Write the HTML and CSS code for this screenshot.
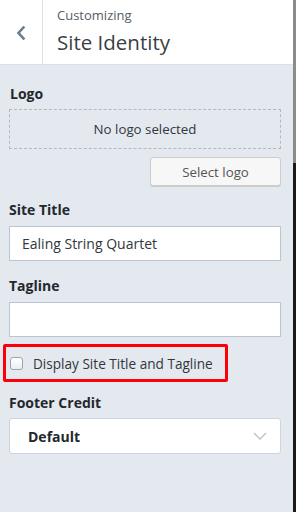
FILE: index.html
```html
<!DOCTYPE html>
<html>
<head>
<meta charset="utf-8">
<link rel="stylesheet" href="styles.css">
</head>
<body>
<div class="page">
  <div class="panel">
    <div class="header">
      <div class="back">
        <svg width="10" height="14" viewBox="0 0 10 14"><path d="M7.5 1.5 L2.5 7 L7.5 12.5" fill="none" stroke="#6b7f90" stroke-width="2.6" stroke-linecap="square"/></svg>
      </div>
      <div class="titles">
        <div class="sub">Customizing</div>
        <div class="title">Site Identity</div>
      </div>
    </div>
    <div class="content">
      <div class="label label-logo">Logo</div>
      <div class="dropzone">No logo selected</div>
      <div class="btn-row"><div class="btn">Select logo</div></div>
      <div class="label label-title">Site Title</div>
      <div class="input">Ealing String Quartet</div>
      <div class="label label-tag">Tagline</div>
      <div class="input"></div>
      <div class="highlight">
        <span class="checkbox"></span>
        <span class="check-text">Display Site Title and Tagline</span>
      </div>
      <div class="label label-footer">Footer Credit</div>
      <div class="select">
        <span class="select-text">Default</span>
        <svg width="14" height="8" viewBox="0 0 14 8"><path d="M1 1 L7 7 L13 1" fill="none" stroke="#b9c2cc" stroke-width="1.3"/></svg>
      </div>
    </div>
  </div>
  <div class="edge"></div>
</div>
</body>
</html>
```
FILE: styles.css
```css
html, body {
  margin: 0;
  padding: 0;
}
body {
  width: 296px;
  height: 512px;
  overflow: hidden;
  font-family: "Open Sans", "Liberation Sans", sans-serif;
  color: #32373c;
}
.page {
  display: flex;
  height: 512px;
}
.panel {
  width: 293px;
  background: #e4e9f0;
  display: flex;
  flex-direction: column;
}
.edge {
  width: 3px;
  background: linear-gradient(#8b8b8b 0, #8b8b8b 163px, #1b1a18 163px, #1b1a18 100%);
}
.header {
  height: 64px;
  background: #fff;
  border-bottom: 1px solid #dde1e6;
  display: flex;
}
.back {
  width: 43px;
  border-right: 1px solid #dde1e6;
  display: flex;
  align-items: center;
  justify-content: center;
  padding-top: 2px;
  box-sizing: border-box;
}
.titles {
  padding-left: 14px;
  padding-top: 6px;
}
.sub {
  font-size: 13px;
  line-height: 18px;
  color: #555d66;
}
.title {
  font-size: 20.5px;
  line-height: 28px;
  margin-top: 4px;
  color: #3a3f44;
}
.content {
  padding: 0 12px 0 9px;
  display: flex;
  flex-direction: column;
}
.label {
  font-size: 14px;
  line-height: 18px;
  font-weight: bold;
  color: #23282d;
}
.label-logo { margin-top: 20px; margin-left: 1px; }
.dropzone {
  margin-top: 6px;
  height: 40px;
  box-sizing: border-box;
  border: 1px dashed #b4b9be;
  display: flex;
  align-items: center;
  justify-content: center;
  font-size: 13.3px;
  color: #32373c;
}
.btn-row {
  display: flex;
  justify-content: flex-end;
  margin-top: 8px;
}
.btn {
  width: 131px;
  height: 29px;
  box-sizing: border-box;
  border: 1px solid #cccccc;
  border-radius: 3px;
  background: #f7f7f7;
  box-shadow: 0 1px 0 #cccccc;
  display: flex;
  align-items: center;
  justify-content: center;
  font-size: 13.3px;
  color: #555;
}
.label-title { margin-top: 15px; }
.input {
  margin-top: 7px;
  height: 35px;
  box-sizing: border-box;
  background: #fff;
  border: 1px solid #b9c5d1;
  padding-left: 12px;
  display: flex;
  align-items: center;
  font-size: 14px;
  color: #32373c;
}
.label-tag { margin-top: 16px; }
.highlight {
  margin-top: 7px;
  margin-left: -6px;
  width: 225px;
  height: 38px;
  box-sizing: border-box;
  border: 3px solid #fb0007;
  border-radius: 2px;
  display: flex;
  align-items: center;
  padding-left: 4px;
}
.checkbox {
  width: 13px;
  height: 13px;
  box-sizing: border-box;
  border: 1px solid #9ea4aa;
  border-radius: 3px;
  background: linear-gradient(#fff, #eceff2);
  margin-right: 10px;
}
.check-text {
  font-size: 13.6px;
  color: #32373c;
}
.label-footer { margin-top: 12px; }
.select {
  margin-top: 6px;
  height: 36px;
  box-sizing: border-box;
  background: #fff;
  border: 1px solid #cdd5dd;
  border-radius: 3px;
  display: flex;
  align-items: center;
  justify-content: space-between;
  padding: 0 13px 0 18px;
}
.select-text {
  font-size: 14px;
  font-weight: bold;
  color: #23282d;
}
```
